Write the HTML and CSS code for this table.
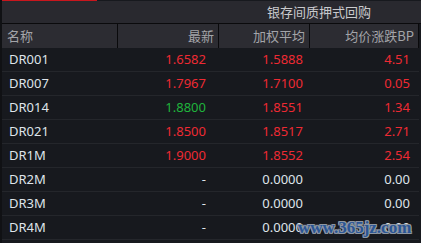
FILE: index.html
```html
<!DOCTYPE html>
<html lang="zh-CN">
<head>
<meta charset="utf-8">
<title>银存间质押式回购</title>
<link rel="stylesheet" href="styles.css">
</head>
<body>
<div class="panel">
  <div class="topline"></div>
  <div class="titlebar">
    <div class="title-spacer"></div>
    <div class="title">银存间质押式回购</div>
  </div>
  <div class="grid">
    <div class="hd name">名称</div>
    <div class="hd num">最新</div>
    <div class="hd num">加权平均</div>
    <div class="hd num last">均价涨跌BP</div>

    <div class="cell name">DR001</div>
    <div class="cell num up">1.6582</div>
    <div class="cell num up">1.5888</div>
    <div class="cell num up">4.51</div>

    <div class="cell name">DR007</div>
    <div class="cell num up">1.7967</div>
    <div class="cell num up">1.7100</div>
    <div class="cell num up">0.05</div>

    <div class="cell name">DR014</div>
    <div class="cell num down">1.8800</div>
    <div class="cell num up">1.8551</div>
    <div class="cell num up">1.34</div>

    <div class="cell name">DR021</div>
    <div class="cell num up">1.8500</div>
    <div class="cell num up">1.8517</div>
    <div class="cell num up">2.71</div>

    <div class="cell name">DR1M</div>
    <div class="cell num up">1.9000</div>
    <div class="cell num up">1.8552</div>
    <div class="cell num up">2.54</div>

    <div class="cell name">DR2M</div>
    <div class="cell num flat">-</div>
    <div class="cell num flat">0.0000</div>
    <div class="cell num flat">0.00</div>

    <div class="cell name">DR3M</div>
    <div class="cell num flat">-</div>
    <div class="cell num flat">0.0000</div>
    <div class="cell num flat">0.00</div>

    <div class="cell name">DR4M</div>
    <div class="cell num flat">-</div>
    <div class="cell num flat">0.0000</div>
    <div class="cell num flat">0.00</div>

    <div class="cell name"></div>
    <div class="cell num"></div>
    <div class="cell num"></div>
    <div class="cell num"></div>
  </div>
  <div class="watermark">www.365jz.com</div>
</div>
</body>
</html>
```
FILE: styles.css
```css
html, body {
  margin: 0;
  padding: 0;
  background: #17191e;
}
body {
  width: 421px;
  height: 243px;
  overflow: hidden;
  font-family: "Noto Sans", "Noto Sans CJK SC", sans-serif;
}
.panel {
  position: relative;
  width: 421px;
  height: 243px;
  overflow: hidden;
  background: #17191e;
  border-left: 2px solid #101114;
  box-sizing: border-box;
}
.topline {
  width: 95px;
  height: 1px;
  background: #c8161d;
}
.titlebar {
  display: flex;
  height: 22px;
  background: #29292f;
  border-bottom: 1px solid #0a0a0c;
}
.title-spacer {
  width: 217px;
}
.title {
  width: 200px;
  text-align: center;
  font-family: "Noto Sans CJK SC", sans-serif;
  font-size: 13px;
  line-height: 22px;
  color: #c9cacd;
}
.grid {
  display: grid;
  grid-template-columns: 116px 101px 91px 109px;
  grid-auto-rows: 24px;
}
.hd {
  background: #2c2c32;
  border-right: 1px solid #0a0a0c;
  font-family: "Noto Sans CJK SC", "Noto Sans", sans-serif;
  font-size: 13px;
  line-height: 24px;
  color: #a3a4a9;
  height: 24px;
  box-sizing: border-box;
}
.hd.name {
  padding-left: 5px;
}
.hd.num {
  text-align: right;
  padding-right: 4px;
}
.cell {
  border-bottom: 1px solid #24262b;
  font-size: 13px;
  line-height: 23px;
  color: #dfe4ea;
  box-sizing: border-box;
  height: 24px;
}
.cell.name {
  padding-left: 7px;
}
.cell.num {
  text-align: right;
}
.grid .cell:nth-child(4n+2) {
  padding-right: 13px;
}
.grid .cell:nth-child(4n+3) {
  padding-right: 7px;
}
.grid .cell:nth-child(4n+4) {
  padding-right: 9px;
}
.up {
  color: #ee2a33 !important;
}
.down {
  color: #1fb43c !important;
}
.flat {
  color: #dfe4ea;
}
.watermark {
  position: absolute;
  left: 296px;
  top: 218px;
  font-family: "Liberation Serif", serif;
  font-weight: bold;
  font-size: 17px;
  line-height: 20px;
  color: #2a5595;
  -webkit-text-stroke: 0;
  text-shadow: 1px 1px 0 #8e97a3, -1px -1px 0 #8e97a3, 1px -1px 0 #8e97a3, -1px 1px 0 #8e97a3, 0 1px 0 #8e97a3, 1px 0 0 #8e97a3, 0 -1px 0 #8e97a3, -1px 0 0 #8e97a3;
}
```
